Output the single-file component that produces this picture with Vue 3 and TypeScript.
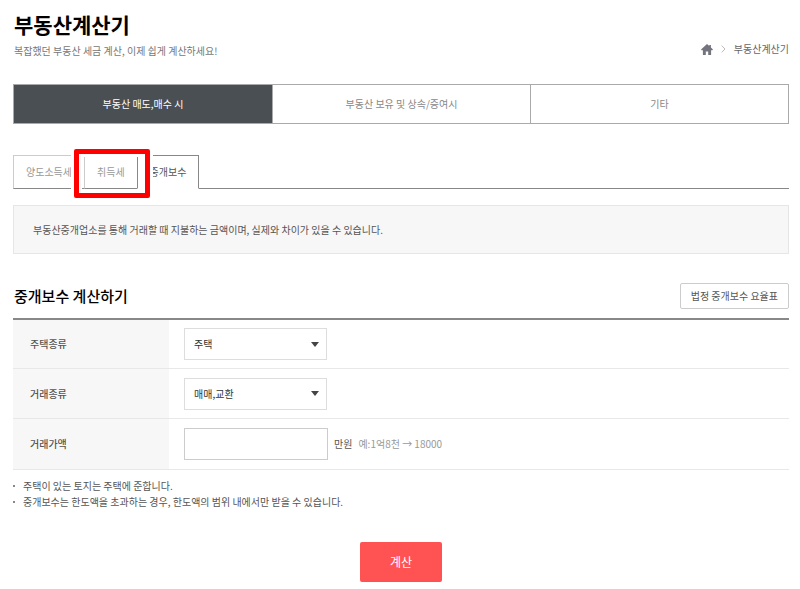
<script setup lang="ts">
import { ref } from 'vue'

const sections = ['부동산 매도,매수 시', '부동산 보유 및 상속/증여시', '기타']
const activeSection = ref(0)

const taxes = ['양도소득세', '취득세', '중개보수']
const activeTax = ref(2)
const highlighted = 1

const houseTypes = ['주택', '오피스텔', '기타']
const dealTypes = ['매매,교환', '전세', '월세']
const houseType = ref('주택')
const dealType = ref('매매,교환')
const price = ref('')

const notes = [
  '주택이 있는 토지는 주택에 준합니다.',
  '중개보수는 한도액을 초과하는 경우, 한도액의 범위 내에서만 받을 수 있습니다.',
]
</script>

<template>
  <main class="page">
    <header class="head">
      <div>
        <h1>부동산계산기</h1>
        <p class="lead">복잡했던 부동산 세금 계산, 이제 쉽게 계산하세요!</p>
      </div>
      <nav class="crumbs">
        <a href="#" aria-label="홈">
          <svg class="home" viewBox="0 0 12 11" width="12" height="11">
            <path d="M6 0 0 5.6 1 6.6 1.9 5.9V11H4.8V7.4H7.2V11H10.1V5.9L11 6.6 12 5.6 9.9 3.6V1H8.3V2.1Z" />
          </svg>
        </a>
        <svg class="chevron" viewBox="0 0 5 8" width="5" height="8">
          <path d="M.7.6 4 4 .7 7.4" />
        </svg>
        <a href="#">부동산계산기</a>
      </nav>
    </header>

    <nav class="sections">
      <button
        v-for="(name, i) in sections"
        :key="name"
        type="button"
        :class="{ on: i === activeSection }"
        @click="activeSection = i"
      >{{ name }}</button>
    </nav>

    <nav class="taxes">
      <div v-for="(name, i) in taxes" :key="name" class="tax">
        <button type="button" :class="{ on: i === activeTax }" @click="activeTax = i">{{ name }}</button>
        <span v-if="i === highlighted" class="marker"></span>
      </div>
      <div class="rule"></div>
    </nav>

    <p class="info">부동산중개업소를 통해 거래할 때 지불하는 금액이며, 실제와 차이가 있을 수 있습니다.</p>

    <form @submit.prevent>
      <div class="form-head">
        <h2>중개보수 계산하기</h2>
        <button type="button" class="rates">법정 중개보수 요율표</button>
      </div>
      <table>
        <tbody>
          <tr>
            <th scope="row"><label for="house">주택종류</label></th>
            <td>
              <div class="select">
                <select id="house" v-model="houseType">
                  <option v-for="t in houseTypes" :key="t">{{ t }}</option>
                </select>
                <svg viewBox="0 0 8 5" width="8" height="5"><path d="M0 0H8L4 5Z" /></svg>
              </div>
            </td>
          </tr>
          <tr>
            <th scope="row"><label for="deal">거래종류</label></th>
            <td>
              <div class="select">
                <select id="deal" v-model="dealType">
                  <option v-for="t in dealTypes" :key="t">{{ t }}</option>
                </select>
                <svg viewBox="0 0 8 5" width="8" height="5"><path d="M0 0H8L4 5Z" /></svg>
              </div>
            </td>
          </tr>
          <tr>
            <th scope="row"><label for="price">거래가액</label></th>
            <td>
              <div class="amount">
                <input id="price" v-model="price" type="text" inputmode="numeric">
                <span class="unit">만원</span>
                <span class="hint">예:1억8천 → 18000</span>
              </div>
            </td>
          </tr>
        </tbody>
      </table>
      <ul class="notes">
        <li v-for="n in notes" :key="n">{{ n }}</li>
      </ul>
      <button type="submit" class="submit">계산</button>
    </form>
  </main>
</template>

<style>
body {
  background: #fff;
}
</style>

<style scoped>
.page {
  padding: 8px 11px 0 13px;
  font-family: "Noto Sans CJK KR", "Noto Sans", sans-serif;
  font-size: 10px;
  line-height: 16px;
  color: #555;
}
.page * {
  box-sizing: border-box;
}
button,
input,
select {
  font: inherit;
  color: inherit;
  margin: 0;
}
button {
  cursor: pointer;
}
a {
  color: inherit;
  text-decoration: none;
}
h1,
h2,
p,
ul {
  margin: 0;
  padding: 0;
}
h1 {
  font-size: 21px;
  line-height: 32px;
  font-weight: 700;
  color: #000;
}
.head {
  display: flex;
  justify-content: space-between;
  align-items: flex-end;
  padding-left: 1px;
}
.lead {
  padding-top: 3px;
  color: #777;
}
.crumbs {
  display: flex;
  align-items: center;
  gap: 8px;
  padding-bottom: 2px;
  color: #666;
}
.crumbs a {
  display: flex;
}
.home {
  fill: #74747f;
}
.chevron {
  fill: none;
  stroke: #bbb;
  stroke-width: 1;
}
.sections {
  display: grid;
  grid-template-columns: repeat(3, 1fr);
  margin-top: 25px;
  border: 1px solid #aaa;
}
.sections button {
  height: 38px;
  padding: 0;
  border: 0;
  background: #fff;
  color: #888;
}
.sections button + button {
  border-left: 1px solid #aaa;
}
.sections .on {
  background: #4a4f53;
  color: #fff;
}
.taxes {
  display: flex;
  margin-top: 31px;
}
.tax {
  position: relative;
}
.tax button {
  height: 34px;
  padding: 0 12px;
  border: 1px solid #ccc;
  border-right: 0;
  border-bottom-color: #888;
  background: #fff;
  color: #999;
}
.tax .on {
  border: 1px solid #888;
  border-bottom-color: #fff;
  color: #555;
}
.rule {
  flex: 1;
  border-bottom: 1px solid #888;
}
.marker {
  position: absolute;
  inset: -6px -13px -9px -10px;
  border: 5px solid #fe0000;
  border-radius: 2px;
  box-shadow: 0 0 0 3px #fff, inset 0 0 0 3px #fff;
  z-index: 1;
  pointer-events: none;
}
.info {
  margin-top: 16px;
  padding: 16px 19px 15px;
  border: 1px solid #e6e6e6;
  background: #f7f7f7;
}
.form-head {
  display: flex;
  justify-content: space-between;
  align-items: center;
  padding: 29px 0 9px 1px;
}
h2 {
  font-size: 15px;
  line-height: 26px;
  font-weight: 500;
  color: #000;
}
.rates {
  height: 26px;
  padding: 0 10px;
  border: 1px solid #ccc;
  border-radius: 2px;
  background: #fff;
}
table {
  width: 100%;
  border-spacing: 0;
  border-top: 2px solid #888;
}
th,
td {
  height: 50px;
  padding: 0;
  border-bottom: 1px solid #e8e8e8;
  text-align: left;
}
tr:first-child > * {
  height: 49px;
}
tr:last-child > * {
  height: 51px;
}
th {
  width: 156px;
  padding-left: 17px;
  background: #f7f7f7;
  font-weight: 500;
}
td {
  padding-left: 15px;
}
.select {
  display: flex;
  align-items: center;
  width: 143px;
  height: 32px;
  position: relative;
}
.select select {
  width: 100%;
  height: 100%;
  padding: 0 24px 0 9px;
  border: 1px solid #ddd;
  border-radius: 0;
  background: #fff;
  appearance: none;
  color: #333;
}
.select svg {
  position: absolute;
  right: 8px;
  fill: #444;
  pointer-events: none;
}
.amount {
  display: flex;
  align-items: center;
  gap: 6px;
}
.amount input {
  width: 144px;
  height: 32px;
  padding: 0 8px;
  border: 1px solid #ccc;
}
.hint {
  color: #999;
}
.notes {
  padding-top: 8px;
  list-style: none;
}
.notes li {
  display: flex;
  align-items: center;
  gap: 8px;
}
.notes li::before {
  content: "";
  width: 2px;
  height: 2px;
  background: #888;
}
.submit {
  display: block;
  width: 82px;
  height: 40px;
  margin: 32px auto 0;
  padding: 0;
  border: 0;
  border-radius: 2px;
  background: #ff5252;
  color: #fff;
  font-size: 12px;
}
</style>
